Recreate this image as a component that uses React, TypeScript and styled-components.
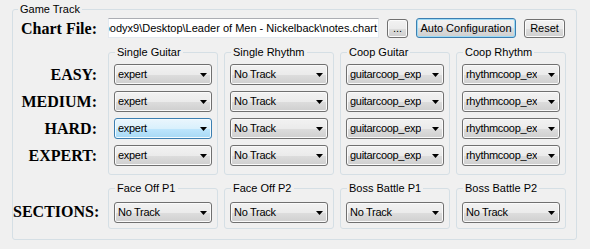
import React from "react";
import styled, { createGlobalStyle, css } from "styled-components";

const GlobalStyle = createGlobalStyle`
  html, body {
    margin: 0;
    padding: 0;
    background: #f0f0f0;
  }
  body {
    font-family: "Liberation Sans", Arial, sans-serif;
    font-size: 11px;
    color: #000;
  }
`;

const Page = styled.div`
  width: 590px;
  height: 249px;
  box-sizing: border-box;
  padding: 9px 0 0 12px;
  background: #f0f0f0;
`;

const GroupBox = styled.div`
  position: relative;
  box-sizing: border-box;
  border: 1px solid #d5dfe5;
  border-radius: 3px;
`;

const Frame = styled(GroupBox)`
  width: 565px;
  height: 231px;
  padding: 8px 10px 10px 0;
`;

const Caption = styled.span<{ $left: number }>`
  position: absolute;
  top: -7px;
  left: ${(p) => p.$left}px;
  padding: 0 2px;
  line-height: 13px;
  font-size: 11px;
  white-space: nowrap;
  background: #f0f0f0;
`;

const FileRow = styled.div`
  display: flex;
  align-items: center;
  height: 20px;
`;

const RowLabel = styled.div`
  width: 89px;
  flex-shrink: 0;
  box-sizing: border-box;
  padding-right: 5px;
  height: 21px;
  line-height: 21px;
  text-align: right;
  white-space: nowrap;
  font-family: "Liberation Serif", "Times New Roman", serif;
  font-weight: bold;
  font-size: 16px;
`;

const PathBox = styled.div`
  flex: 0 0 271px;
  height: 20px;
  margin-left: 6px;
  box-sizing: border-box;
  display: flex;
  justify-content: flex-end;
  align-items: center;
  overflow: hidden;
  background: #fff;
  border: 1px solid #e3e9ef;
  border-top-color: #abadb3;
  padding-right: 1px;
  white-space: nowrap;
`;

const PushButton = styled.button<{ $w: number; $focused?: boolean }>`
  flex: 0 0 ${(p) => p.$w}px;
  height: 19px;
  margin-left: 8px;
  padding: 0;
  box-sizing: border-box;
  font-family: "Liberation Sans", Arial, sans-serif;
  font-size: 11px;
  color: #000;
  line-height: 15px;
  border: 1px solid #707070;
  border-radius: 3px;
  background: linear-gradient(#f2f2f2 0%, #ebebeb 50%, #dddddd 51%, #cfcfcf 100%);
  box-shadow: inset 0 0 0 1px #fbfbfb;
  ${(p) =>
    p.$focused &&
    css`
      height: 20px;
      border-color: #3c7fb1;
      box-shadow: inset 0 0 0 1px #9cdaf5;
    `}
`;

const Section = styled.div<{ $mt: number }>`
  display: flex;
  column-gap: 6px;
  margin-top: ${(p) => p.$mt}px;
`;

const LabelColumn = styled.div<{ $top: number }>`
  width: 89px;
  flex-shrink: 0;
  display: flex;
  flex-direction: column;
  row-gap: 6px;
  padding-top: ${(p) => p.$top}px;
`;

const TrackGroup = styled(GroupBox)<{ $pt: number; $pb: number }>`
  width: 110px;
  display: flex;
  flex-direction: column;
  row-gap: 6px;
  padding: ${(p) => p.$pt}px 5px ${(p) => p.$pb}px 5px;
`;

const Combo = styled.div<{ $hot?: boolean }>`
  width: 98px;
  height: 21px;
  box-sizing: border-box;
  display: flex;
  align-items: center;
  padding-left: 3px;
  border: 1px solid #707070;
  border-radius: 3px;
  background: linear-gradient(#f2f2f2 0%, #ebebeb 50%, #dddddd 51%, #cfcfcf 100%);
  box-shadow: inset 0 0 0 1px #fafafa;
  ${(p) =>
    p.$hot &&
    css`
      border-color: #3c7fb1;
      background: linear-gradient(#eaf6fd 0%, #d9f0fc 50%, #bee6fd 51%, #a7d9f5 100%);
      box-shadow: inset 0 0 0 1px #f3fbff;
    `}
`;

const ComboText = styled.span`
  width: 71px;
  overflow: hidden;
  white-space: nowrap;
  line-height: 19px;
  letter-spacing: -0.3px;
`;

const Arrow = styled.svg`
  margin-left: auto;
  margin-right: 4px;
`;

const DropCombo = ({ value, hot }: { value: string; hot?: boolean }) => (
  <Combo $hot={hot}>
    <ComboText>{value}</ComboText>
    <Arrow width="7" height="4" viewBox="0 0 7 4">
      <path d="M0 0h7L3.5 4z" fill="#000" />
    </Arrow>
  </Combo>
);

const difficulties = ["EASY:", "MEDIUM:", "HARD:", "EXPERT:"];

const tracks = [
  { title: "Single Guitar", value: "expert" },
  { title: "Single Rhythm", value: "No Track" },
  { title: "Coop Guitar", value: "guitarcoop_expert" },
  { title: "Coop Rhythm", value: "rhythmcoop_expert" },
];

const sections = ["Face Off P1", "Face Off P2", "Boss Battle P1", "Boss Battle P2"];

const App = () => {
  return (
    <Page>
      <GlobalStyle />
      <Frame>
        <Caption $left={5}>Game Track</Caption>
        <FileRow>
          <RowLabel>Chart File:</RowLabel>
          <PathBox>Woodyx9\Desktop\Leader of Men - Nickelback\notes.chart</PathBox>
          <PushButton $w={21}>...</PushButton>
          <PushButton $w={100} $focused>
            Auto Configuration
          </PushButton>
          <PushButton $w={41}>Reset</PushButton>
        </FileRow>

        <Section $mt={14}>
          <LabelColumn $top={12}>
            {difficulties.map((d) => (
              <RowLabel key={d}>{d}</RowLabel>
            ))}
          </LabelColumn>
          {tracks.map((t, col) => (
            <TrackGroup key={t.title} $pt={11} $pb={8}>
              <Caption $left={6}>{t.title}</Caption>
              {difficulties.map((d, row) => (
                <DropCombo key={d} value={t.value} hot={col === 0 && row === 2} />
              ))}
            </TrackGroup>
          ))}
        </Section>

        <Section $mt={13}>
          <LabelColumn $top={13}>
            <RowLabel>SECTIONS:</RowLabel>
          </LabelColumn>
          {sections.map((s) => (
            <TrackGroup key={s} $pt={13} $pb={5}>
              <Caption $left={6}>{s}</Caption>
              <DropCombo value="No Track" />
            </TrackGroup>
          ))}
        </Section>
      </Frame>
    </Page>
  );
};

export default App;
